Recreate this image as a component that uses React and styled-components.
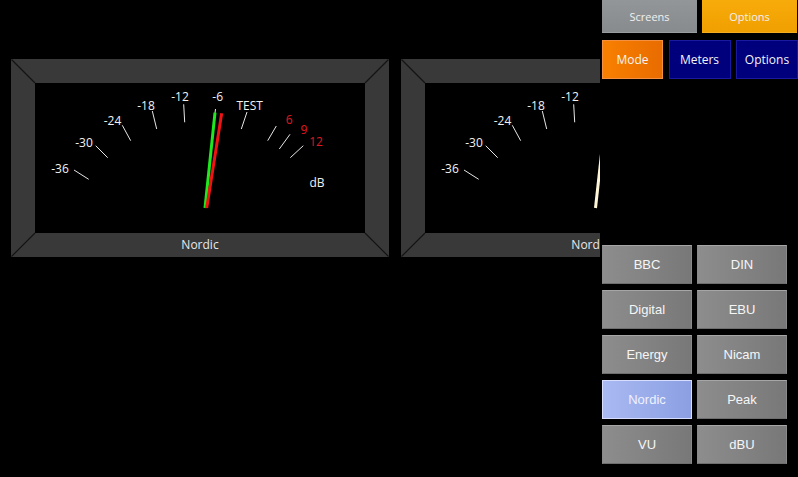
import styled, { createGlobalStyle } from "styled-components";

const GlobalStyle = createGlobalStyle`
  html, body {
    margin: 0;
    padding: 0;
    background: #000;
  }
  * {
    box-sizing: border-box;
  }
`;

const TICKS = [
  [39, 87, 53.7, 96.3],
  [60.7, 62.7, 72.7, 74.7],
  [87.3, 42.3, 95.7, 57.7],
  [117.3, 28, 121.7, 46],
  [148.7, 21.3, 149.7, 39.3],
  [180.5, 26, 178.5, 42],
  [212, 29, 206.3, 46],
  [241.3, 43, 232.7, 57.7],
  [255, 51.3, 244.3, 66],
  [268.3, 62.7, 255.3, 74.7],
];

const LABELS = [
  { t: "-36", x: 25, y: 90 },
  { t: "-30", x: 49, y: 63.5 },
  { t: "-24", x: 77.5, y: 41.5 },
  { t: "-18", x: 111, y: 27 },
  { t: "-12", x: 145, y: 18 },
  { t: "-6", x: 182.7, y: 18 },
  { t: "TEST", x: 214.7, y: 26.5 },
  { t: "6", x: 254.3, y: 41, red: true },
  { t: "9", x: 269, y: 51, red: true },
  { t: "12", x: 281, y: 63, red: true },
  { t: "dB", x: 282, y: 103.7 },
];

const meters = [
  {
    id: 1,
    name: "Nordic",
    needles: [
      { color: "#1fe81f", x1: 170, y1: 125, x2: 180, y2: 29.7 },
      { color: "#ee1414", x1: 171.7, y1: 125, x2: 186.7, y2: 30.3 },
    ],
  },
  {
    id: 2,
    name: "Nordic",
    needles: [{ color: "#fff6d8", x1: 170.5, y1: 125, x2: 181, y2: 30 }],
  },
];

const topTabs = [
  { label: "Screens", tone: "grey" },
  { label: "Options", tone: "amber" },
];

const modeTabs = [
  { label: "Mode", tone: "orange" },
  { label: "Meters", tone: "navy" },
  { label: "Options", tone: "navy" },
];

const scales = ["BBC", "DIN", "Digital", "EBU", "Energy", "Nicam", "Nordic", "Peak", "VU", "dBU"];

const Meter = ({ meter }) => (
  <Frame>
    <Bevel viewBox="0 0 378 198" preserveAspectRatio="none">
      <line x1="0.5" y1="0.5" x2="24" y2="24" />
      <line x1="377.5" y1="0.5" x2="354" y2="24" />
      <line x1="0.5" y1="197.5" x2="24" y2="174" />
      <line x1="377.5" y1="197.5" x2="354" y2="174" />
    </Bevel>
    <Face>
      <Dial viewBox="0 0 330 150">
        {TICKS.map(([x1, y1, x2, y2], i) => (
          <line key={i} x1={x1} y1={y1} x2={x2} y2={y2} stroke="#e6e6e6" strokeWidth="1" />
        ))}
        {LABELS.map((l) => (
          <DialText key={l.t} x={l.x} y={l.y} $red={l.red}>
            {l.t}
          </DialText>
        ))}
        {meter.needles.map((n, i) => (
          <line key={i} x1={n.x1} y1={n.y1} x2={n.x2} y2={n.y2} stroke={n.color} strokeWidth="3" />
        ))}
      </Dial>
    </Face>
    <Caption>{meter.name}</Caption>
  </Frame>
);

const App = () => {
  return (
    <>
      <GlobalStyle />
      <Screen>
        <MeterArea>
          {meters.map((m) => (
            <Meter key={m.id} meter={m} />
          ))}
        </MeterArea>
        <Panel>
          <TopRow>
            {topTabs.map((t) => (
              <TopTab key={t.label} $tone={t.tone}>
                {t.label}
              </TopTab>
            ))}
          </TopRow>
          <ModeRow>
            {modeTabs.map((t) => (
              <ModeTab key={t.label} $tone={t.tone}>
                {t.label}
              </ModeTab>
            ))}
          </ModeRow>
          <ScaleGrid>
            {scales.map((s) => (
              <ScaleButton key={s} $active={s === "Nordic"}>
                {s}
              </ScaleButton>
            ))}
          </ScaleGrid>
        </Panel>
      </Screen>
    </>
  );
};

export default App;

const Screen = styled.div`
  display: flex;
  width: 798px;
  height: 477px;
  background: #000;
  overflow: hidden;
`;

const MeterArea = styled.div`
  width: 600px;
  flex-shrink: 0;
  display: flex;
  gap: 12px;
  padding: 59px 0 0 11px;
  overflow: hidden;
  align-items: flex-start;
`;

const Frame = styled.div`
  position: relative;
  flex-shrink: 0;
  width: 378px;
  height: 198px;
  background: #393939;
  padding: 24px 24px 0 24px;
  display: flex;
  flex-direction: column;
`;

const Bevel = styled.svg`
  position: absolute;
  inset: 0;
  width: 100%;
  height: 100%;
  line {
    stroke: #141414;
    stroke-width: 1.2;
  }
`;

const Face = styled.div`
  position: relative;
  width: 330px;
  height: 150px;
  background: #000;
`;

const Dial = styled.svg`
  display: block;
  width: 330px;
  height: 150px;
`;

const DialText = styled.text`
  font-family: "Open Sans", "DejaVu Sans", sans-serif;
  font-size: 12px;
  fill: ${(p) => (p.$red ? "#e01820" : "#f2f2f2")};
  text-anchor: middle;
`;

const Caption = styled.div`
  position: relative;
  height: 24px;
  line-height: 24px;
  text-align: center;
  font-family: "Open Sans", "DejaVu Sans", sans-serif;
  font-size: 12px;
  color: #e8e8e8;
`;

const Panel = styled.div`
  width: 198px;
  flex-shrink: 0;
  padding-left: 2px;
  display: flex;
  flex-direction: column;
`;

const TopRow = styled.div`
  display: grid;
  grid-template-columns: 95px 95px;
  column-gap: 5px;
  height: 33px;
`;

const toneBg = {
  grey: "linear-gradient(180deg, #939699 0%, #888b8e 100%)",
  amber: "linear-gradient(180deg, #f7ab0a 0%, #f0a000 100%)",
  orange: "linear-gradient(90deg, #f88000 0%, #e86c00 100%)",
  navy: "#00007c",
};

const toneBorder = {
  grey: "#9a9da0",
  amber: "#f5ad20",
  orange: "#f49040",
  navy: "#1a1aa0",
};

const TopTab = styled.div`
  display: flex;
  align-items: center;
  justify-content: center;
  background: ${(p) => toneBg[p.$tone]};
  border-bottom: 1px solid ${(p) => toneBorder[p.$tone]};
  font-family: "Open Sans", "DejaVu Sans", sans-serif;
  font-size: 11px;
  color: #f0f0f0;
`;

const ModeRow = styled.div`
  display: grid;
  grid-template-columns: 61px 62px 62px;
  column-gap: 5.5px;
  height: 39px;
  margin-top: 7px;
`;

const ModeTab = styled.div`
  display: flex;
  align-items: center;
  justify-content: center;
  background: ${(p) => toneBg[p.$tone]};
  border: 1px solid ${(p) => toneBorder[p.$tone]};
  font-family: "Open Sans", "DejaVu Sans", sans-serif;
  font-size: 12px;
  color: #f4f4f4;
`;

const ScaleGrid = styled.div`
  display: grid;
  grid-template-columns: 90px 90px;
  grid-auto-rows: 39px;
  column-gap: 5px;
  row-gap: 6px;
  margin-top: 166px;
`;

const ScaleButton = styled.div`
  display: flex;
  align-items: center;
  justify-content: center;
  background: ${(p) =>
    p.$active
      ? "linear-gradient(90deg, #a9b9f2 0%, #8b9fe2 100%)"
      : "linear-gradient(90deg, #8d8d8d 0%, #787878 100%)"};
  border: 1px solid ${(p) => (p.$active ? "#d6ddff" : "#8a8a8a")};
  border-top-color: ${(p) => (p.$active ? "#d6ddff" : "#a6a6a6")};
  border-bottom-color: ${(p) => (p.$active ? "#d6ddff" : "#6e6e6e")};
  font-family: "Liberation Sans", Arial, sans-serif;
  font-size: 13px;
  color: ${(p) => (p.$active ? "#eef2ff" : "#f6f6f6")};
`;
